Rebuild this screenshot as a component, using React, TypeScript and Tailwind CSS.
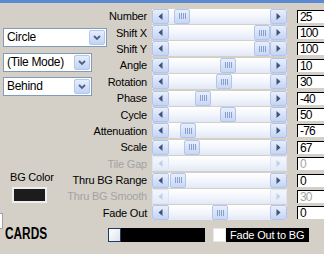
import React from "react";

type Row = { label: string; value: string; pos: number | null; disabled?: boolean };

const rows: Row[] = [
  { label: "Number", value: "25", pos: 5 },
  { label: "Shift X", value: "100", pos: 85 },
  { label: "Shift Y", value: "100", pos: 85 },
  { label: "Angle", value: "10", pos: 51 },
  { label: "Rotation", value: "30", pos: 47 },
  { label: "Phase", value: "-40", pos: 26 },
  { label: "Cycle", value: "50", pos: 51 },
  { label: "Attenuation", value: "-76", pos: 11 },
  { label: "Scale", value: "67", pos: 15 },
  { label: "Tile Gap", value: "0", pos: null, disabled: true },
  { label: "Thru BG Range", value: "0", pos: 1 },
  { label: "Thru BG Smooth", value: "30", pos: null, disabled: true },
  { label: "Fade Out", value: "0", pos: 43 },
];

const rowStart = [
  "row-start-1",
  "row-start-2",
  "row-start-3",
  "row-start-4",
  "row-start-5",
  "row-start-6",
  "row-start-7",
  "row-start-8",
  "row-start-9",
  "row-start-10",
  "row-start-11",
  "row-start-12",
  "row-start-13",
];

function Arrow({ dir, disabled }: { dir: "left" | "right"; disabled?: boolean }) {
  return (
    <div
      className={
        disabled
          ? "w-[17px] h-full rounded-[2px] border border-[#dde5f5] bg-gradient-to-b from-[#f3f6fd] to-[#e3eaf8] flex items-center justify-center"
          : "w-[17px] h-full rounded-[2px] border border-[#b3c5ea] bg-gradient-to-b from-[#e8effd] to-[#c4d4f4] flex items-center justify-center"
      }
    >
      <svg width="5" height="7" viewBox="0 0 5 7">
        {dir === "left" ? (
          <polygon points="4.5,0 4.5,7 0.5,3.5" fill={disabled ? "#c3cfe6" : "#3f5379"} />
        ) : (
          <polygon points="0.5,0 0.5,7 4.5,3.5" fill={disabled ? "#c3cfe6" : "#3f5379"} />
        )}
      </svg>
    </div>
  );
}

function Scroll({ pos, disabled }: { pos: number | null; disabled?: boolean }) {
  return (
    <div className="flex h-[15px] w-[135px] bg-gradient-to-b from-[#ffffff] via-[#f3f6fc] to-[#e2e8f6]">
      <Arrow dir="left" disabled={disabled} />
      <div className="relative flex-1">
        {pos !== null && (
          <div
            className="absolute top-0 h-full w-[16px] rounded-[2px] border border-[#b3c5ea] bg-gradient-to-b from-[#e8effd] to-[#c8d7f5] flex items-center justify-center gap-[1px]"
            style={{ left: pos }}
          >
            <div className="w-px h-[6px] bg-[#8aa0cc]" />
            <div className="w-px h-[6px] bg-[#8aa0cc]" />
            <div className="w-px h-[6px] bg-[#8aa0cc]" />
            <div className="w-px h-[6px] bg-[#8aa0cc]" />
          </div>
        )}
      </div>
      <Arrow dir="right" disabled={disabled} />
    </div>
  );
}

function Combo({ text, width }: { text: string; width: string }) {
  return (
    <div className={`${width} h-[19px] border border-[#7f9db9] bg-white flex items-stretch`}>
      <div className="flex-1 pl-[3px] text-[12px] leading-[17px] tracking-[-0.3px] text-black whitespace-nowrap">{text}</div>
      <div className="w-[16px] my-[1px] mr-[1px] rounded-[2px] border border-[#b3c5ea] bg-gradient-to-b from-[#e6eefd] to-[#c2d3f4] flex items-center justify-center">
        <svg width="8" height="6" viewBox="0 0 8 6">
          <polyline points="1,1 4,4 7,1" fill="none" stroke="#4d6185" strokeWidth="1.8" />
        </svg>
      </div>
    </div>
  );
}

export default function App() {
  return (
    <div
      className="w-[324px] h-[254px] overflow-hidden bg-[#d4d0c8] border-t-[3px] border-[#5b8ad1] text-black"
      style={{ fontFamily: '"Liberation Sans", Arial, sans-serif' }}
    >
      <div className="grid grid-cols-[152px_145px_40px] grid-rows-[repeat(13,16.4px)] mt-[5px]">
        <div className="col-start-1 row-start-1 row-span-13 self-start justify-self-start flex flex-col items-start pl-[3px] pt-[20px]">
          <Combo text="Circle" width="w-[104px]" />
          <div className="h-[6px]" />
          <Combo text="(Tile Mode)" width="w-[89px]" />
          <div className="h-[5px]" />
          <Combo text="Behind" width="w-[89px]" />
          <div className="ml-[7px] mt-[75px] flex flex-col items-start">
            <div className="text-[11px] leading-[12px] tracking-[-0.2px] whitespace-nowrap">BG Color</div>
            <div className="ml-[2px] mt-[4px] w-[35px] h-[16px] border-2 border-[#eeeeee] bg-[#1c1c1c]" />
          </div>
          <div className="-ml-[10px] mt-[10px] w-[10px] h-[16px] border border-[#a0a0a0] bg-white" />
        </div>
        {rows.map((r, i) => (
          <React.Fragment key={r.label}>
            <div
              className={`col-start-1 ${rowStart[i]} justify-self-end self-center pr-[5px] text-[11px] leading-[12px] tracking-[-0.2px] whitespace-nowrap ${
                r.disabled ? "text-[#a3a3a3]" : "text-black"
              }`}
            >
              {r.label}
            </div>
            <div className={`col-start-2 ${rowStart[i]} self-center`}>
              <Scroll pos={r.pos} disabled={r.disabled} />
            </div>
            <div
              className={`col-start-3 ${rowStart[i]} self-center w-[32px] h-[13px] border-t border-l border-black bg-white pl-[2px] text-[12px] leading-[12px] tracking-[-0.8px] ${
                r.disabled ? "text-[#a3a3a3]" : "text-black"
              }`}
            >
              {r.value}
            </div>
          </React.Fragment>
        ))}
      </div>
      <div className="flex items-start mt-[1px]">
        <div className="w-[108px] pl-[5px]">
          <span className="inline-block origin-left scale-x-[0.74] text-[16px] leading-[18px] font-bold">CARDS</span>
        </div>
        <div className="mt-[6px] flex h-[14px] w-[97px]">
          <div className="w-[13px] h-full border border-[#1f3c66] bg-gradient-to-br from-white to-[#dfe3ea]" />
          <div className="flex-1 bg-black" />
        </div>
        <div className="mt-[6px] ml-[8px] flex h-[14px]">
          <div className="w-[13px] h-full bg-white border border-[#e8e8e8]" />
          <div className="w-[83px] h-full bg-black text-white text-[11px] leading-[14px] tracking-[-0.2px] pl-[4px] whitespace-nowrap">
            Fade Out to BG
          </div>
        </div>
      </div>
    </div>
  );
}
